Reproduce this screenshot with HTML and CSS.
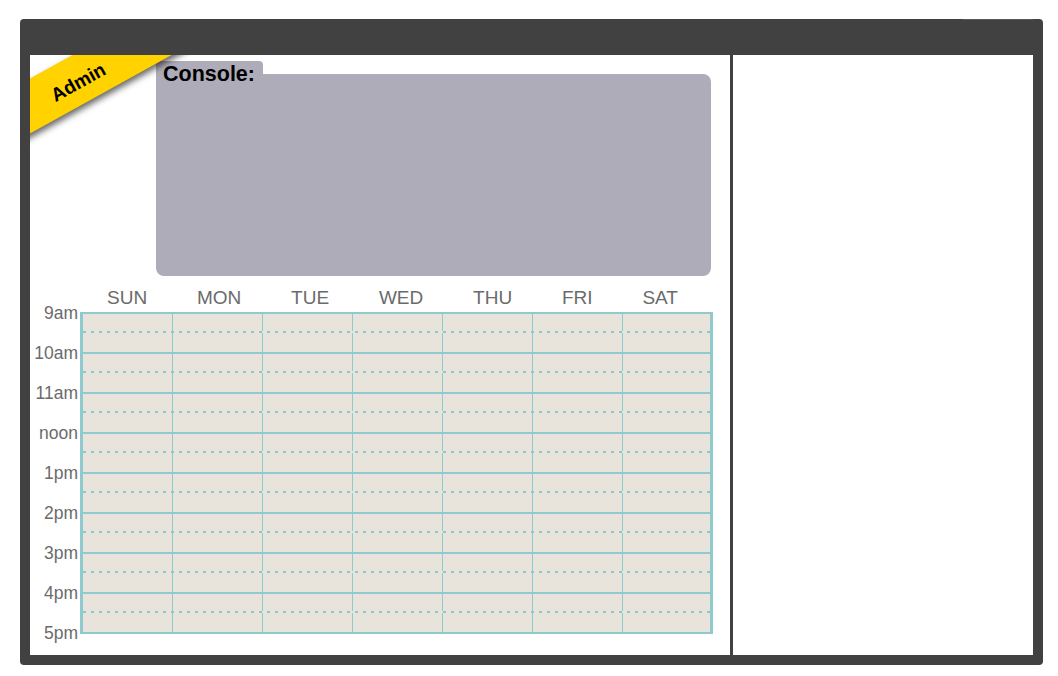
FILE: index.html
```html
<!DOCTYPE html>
<html lang="en">
<head>
<meta charset="utf-8">
<title>Admin Console</title>
<link rel="stylesheet" href="styles.css">
</head>
<body>
<div class="frame">
  <div class="frame-glint"></div>
  <div class="board">
    <div class="ribbon"><span>Admin</span></div>
    <div class="console">
      <div class="console-tab"><span class="console-label">Console:</span></div>
      <div class="console-body"></div>
    </div>
    <div class="days">
      <span>SUN</span><span>MON</span><span>TUE</span><span>WED</span><span>THU</span><span>FRI</span><span>SAT</span>
    </div>
    <div class="schedule">
      <div class="times">
        <div class="time">9am</div>
        <div class="time">10am</div>
        <div class="time">11am</div>
        <div class="time">noon</div>
        <div class="time">1pm</div>
        <div class="time">2pm</div>
        <div class="time">3pm</div>
        <div class="time">4pm</div>
        <div class="time">5pm</div>
      </div>
      <div class="grid">
        <div class="row"><div class="cell"></div><div class="cell"></div><div class="cell"></div><div class="cell"></div><div class="cell"></div><div class="cell"></div><div class="cell"></div><div class="dash"></div></div>
        <div class="row"><div class="cell"></div><div class="cell"></div><div class="cell"></div><div class="cell"></div><div class="cell"></div><div class="cell"></div><div class="cell"></div><div class="dash"></div></div>
        <div class="row"><div class="cell"></div><div class="cell"></div><div class="cell"></div><div class="cell"></div><div class="cell"></div><div class="cell"></div><div class="cell"></div><div class="dash"></div></div>
        <div class="row"><div class="cell"></div><div class="cell"></div><div class="cell"></div><div class="cell"></div><div class="cell"></div><div class="cell"></div><div class="cell"></div><div class="dash"></div></div>
        <div class="row"><div class="cell"></div><div class="cell"></div><div class="cell"></div><div class="cell"></div><div class="cell"></div><div class="cell"></div><div class="cell"></div><div class="dash"></div></div>
        <div class="row"><div class="cell"></div><div class="cell"></div><div class="cell"></div><div class="cell"></div><div class="cell"></div><div class="cell"></div><div class="cell"></div><div class="dash"></div></div>
        <div class="row"><div class="cell"></div><div class="cell"></div><div class="cell"></div><div class="cell"></div><div class="cell"></div><div class="cell"></div><div class="cell"></div><div class="dash"></div></div>
        <div class="row last"><div class="cell"></div><div class="cell"></div><div class="cell"></div><div class="cell"></div><div class="cell"></div><div class="cell"></div><div class="cell"></div><div class="dash"></div></div>
      </div>
    </div>
  </div>
  <div class="side"></div>
</div>
</body>
</html>
```

FILE: styles.css
```css
* {
  box-sizing: border-box;
}

html, body {
  margin: 0;
  padding: 0;
  background: #ffffff;
}

body {
  font-family: "Liberation Sans", Arial, Helvetica, sans-serif;
}

.frame {
  position: relative;
  margin: 19px 0 0 20px;
  width: 1023px;
  height: 646px;
  background: #414141;
  border-radius: 4px;
  padding: 36px 10px 10px 10px;
  display: flex;
  gap: 3px;
}

.frame-glint {
  position: absolute;
  top: 0;
  right: 10px;
  width: 70px;
  height: 1px;
  background: #5a5a5a;
}

.board {
  position: relative;
  width: 700px;
  height: 600px;
  background: #ffffff;
  overflow: hidden;
  padding-top: 6px;
}

.side {
  width: 300px;
  height: 600px;
  background: #ffffff;
}

/* Admin ribbon */
.ribbon {
  position: absolute;
  left: -73px;
  top: 1px;
  width: 240px;
  height: 48px;
  background: #ffd200;
  transform: rotate(-29deg);
  box-shadow: 0 4px 6px rgba(0, 0, 0, 0.6);
  display: flex;
  align-items: center;
  justify-content: center;
  padding-top: 6px;
  z-index: 2;
}

.ribbon span {
  font-weight: bold;
  font-size: 19px;
  color: #000000;
}

/* Console */
.console {
  margin-left: 126px;
  width: 555px;
}

.console-tab {
  width: 107px;
  height: 13px;
  background: #aeacb9;
  border-radius: 4px 4px 0 0;
  padding: 2px 0 0 7px;
  position: relative;
  z-index: 1;
}

.console-label {
  display: block;
  font-weight: bold;
  font-size: 21.5px;
  line-height: 22px;
  color: #000000;
  white-space: nowrap;
}

.console-body {
  height: 202px;
  background: #aeacb9;
  border-radius: 0 8px 8px 8px;
}

/* Day headers */
.days {
  margin: 11px 0 0 77px;
  width: 571px;
  height: 22px;
  display: flex;
  justify-content: space-between;
  font-size: 19px;
  line-height: 22px;
  color: #6b6b6b;
}

/* Schedule */
.schedule {
  margin-top: 3px;
  display: flex;
  align-items: flex-start;
}

.times {
  width: 48px;
  margin: -19px 2px 0 0;
}

.time {
  height: 40px;
  line-height: 40px;
  font-size: 17.5px;
  text-align: right;
  color: #6b6b6b;
}

.grid {
  width: 633px;
  border-left: 3px solid #8fcacf;
  border-right: 3px solid #8fcacf;
  background: #e8e4db;
}

.row {
  position: relative;
  height: 40px;
  border-top: 2px solid #8fcacf;
  display: grid;
  grid-template-columns: 89px repeat(5, 90px) 88px;
}

.row.last {
  height: 42px;
  border-bottom: 2px solid #8fcacf;
}

.dash {
  position: absolute;
  left: 0;
  right: 0;
  top: 17px;
  height: 2px;
  background-image: repeating-linear-gradient(90deg, #84c8cf 0px, #84c8cf 3px, #e8e4db 3px, #e8e4db 8px);
  opacity: 0.95;
}

.cell + .cell {
  border-left: 1px solid #8fcacf;
}
```
